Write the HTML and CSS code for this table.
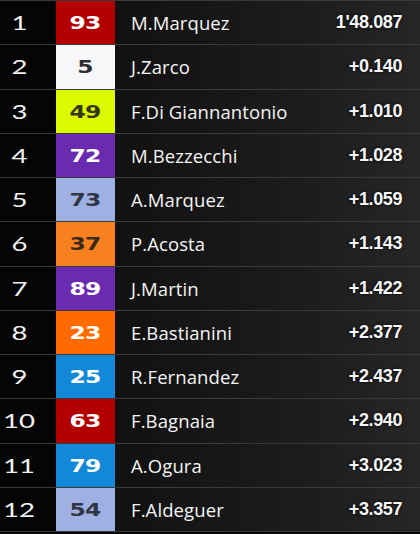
FILE: index.html
```html
<!DOCTYPE html>
<html>
<head>
<meta charset="utf-8">
<link rel="stylesheet" href="styles.css">
</head>
<body>
<div class="board">
  <div class="row"><div class="pos"><span>1</span></div><div class="num c-red"><span>93</span></div><div class="name">M.Marquez</div><div class="time">1'48.087</div></div>
  <div class="row"><div class="pos"><span>2</span></div><div class="num c-white"><span>5</span></div><div class="name">J.Zarco</div><div class="time">+0.140</div></div>
  <div class="row"><div class="pos"><span>3</span></div><div class="num c-lime"><span>49</span></div><div class="name">F.Di Giannantonio</div><div class="time">+1.010</div></div>
  <div class="row"><div class="pos"><span>4</span></div><div class="num c-purple"><span>72</span></div><div class="name">M.Bezzecchi</div><div class="time">+1.028</div></div>
  <div class="row"><div class="pos"><span>5</span></div><div class="num c-lav"><span>73</span></div><div class="name">A.Marquez</div><div class="time">+1.059</div></div>
  <div class="row"><div class="pos"><span>6</span></div><div class="num c-orange-d"><span>37</span></div><div class="name">P.Acosta</div><div class="time">+1.143</div></div>
  <div class="row"><div class="pos"><span>7</span></div><div class="num c-purple"><span>89</span></div><div class="name">J.Martin</div><div class="time">+1.422</div></div>
  <div class="row"><div class="pos"><span>8</span></div><div class="num c-orange"><span>23</span></div><div class="name">E.Bastianini</div><div class="time">+2.377</div></div>
  <div class="row"><div class="pos"><span>9</span></div><div class="num c-blue"><span>25</span></div><div class="name">R.Fernandez</div><div class="time">+2.437</div></div>
  <div class="row"><div class="pos"><span>10</span></div><div class="num c-red"><span>63</span></div><div class="name">F.Bagnaia</div><div class="time">+2.940</div></div>
  <div class="row"><div class="pos"><span>11</span></div><div class="num c-blue"><span>79</span></div><div class="name">A.Ogura</div><div class="time">+3.023</div></div>
  <div class="row"><div class="pos"><span>12</span></div><div class="num c-lav"><span>54</span></div><div class="name">F.Aldeguer</div><div class="time">+3.357</div></div>
</div>
</body>
</html>
```
FILE: styles.css
```css
html, body {
  margin: 0;
  padding: 0;
  background: #050505;
}
.board {
  width: 420px;
  height: 534px;
  display: flex;
  flex-direction: column;
  background: #050505;
}
.row {
  height: 44.25px;
  box-sizing: border-box;
  border-top: 1px solid #3a3a3a;
  display: flex;
  align-items: stretch;
  background: linear-gradient(to right, #050505 0, #050505 115px, #111111 115px, #1c1c1c 300px, #262626 420px);
}
.row:last-child {
  border-bottom: 1px solid #3a3a3a;
  height: 45.25px;
}
.pos {
  width: 56px;
  flex: none;
  display: flex;
  align-items: center;
  justify-content: center;
  padding-right: 17px;
  box-sizing: border-box;
  color: #f2f2f2;
  font-family: Lato, "DejaVu Sans", sans-serif;
  font-weight: 400;
  font-size: 19px;
}
.pos span {
  display: inline-block;
  transform: scaleX(1.45);
}
.num {
  width: 59px;
  flex: none;
  display: flex;
  align-items: center;
  justify-content: center;
  font-family: "DejaVu Sans", sans-serif;
  font-weight: 700;
  font-size: 18px;
  color: #ffffff;
}
.num span {
  display: inline-block;
  transform: scaleX(1.3);
  letter-spacing: -0.5px;
}
.name {
  flex: 1;
  display: flex;
  align-items: center;
  padding-left: 16px;
  color: #f4f4f4;
  font-family: "Open Sans", sans-serif;
  font-weight: 500;
  font-size: 18.5px;
  letter-spacing: 0.1px;
}
.time {
  flex: none;
  display: flex;
  align-items: center;
  padding-right: 18px;
  color: #f6f6f6;
  font-family: "Liberation Sans", Arial, sans-serif;
  font-weight: 700;
  font-size: 18px;
  letter-spacing: -0.4px;
  text-shadow: 0 0 3px #000;
}
.c-red { background: #b30000; }
.c-white { background: #f7f7f9; color: #2e2e32; }
.c-lime { background: #dcfb00; color: #34361a; }
.c-purple { background: #6a2bb0; }
.c-lav { background: #9fb1e2; color: #303644; }
.c-orange-d { background: #f7801f; color: #3a2a1e; }
.c-orange { background: #ff6b00; }
.c-blue { background: #1388d8; }
```
